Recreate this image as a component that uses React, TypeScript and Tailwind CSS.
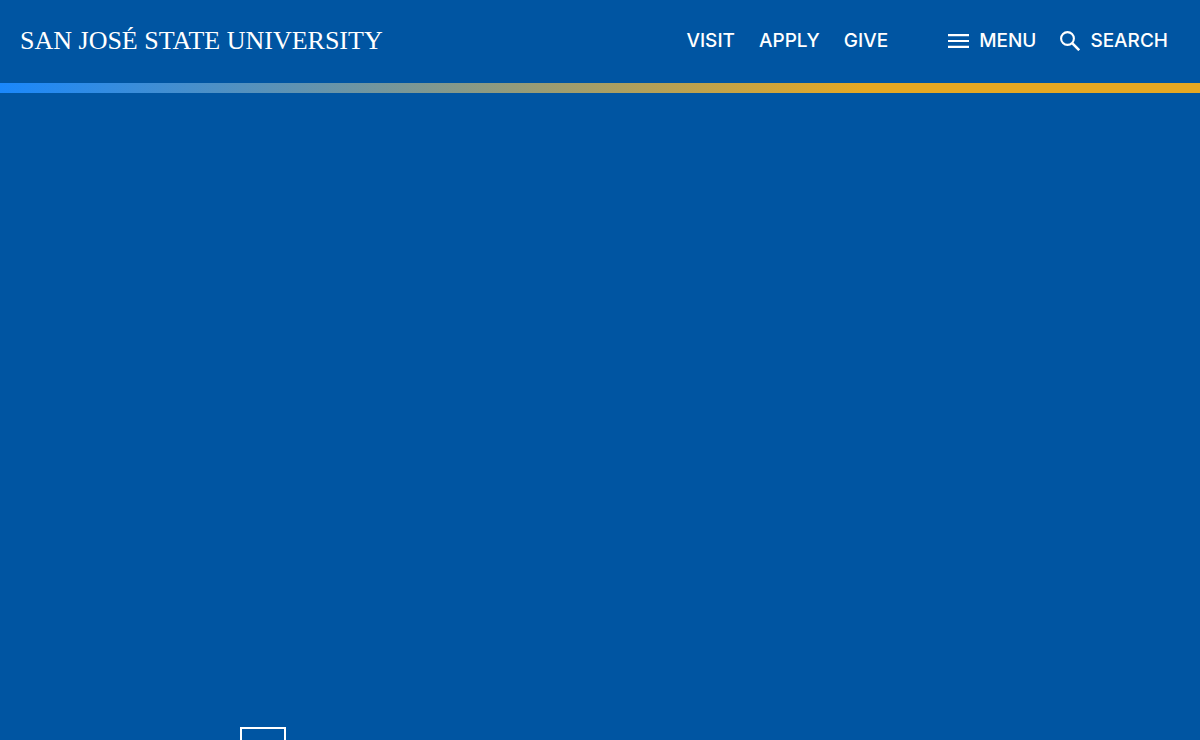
const links = [
  { label: "VISIT", href: "/visit" },
  { label: "APPLY", href: "/apply" },
  { label: "GIVE", href: "/give" },
];

function MenuIcon() {
  return (
    <svg width="21" height="14" viewBox="0 0 21 14" fill="currentColor" aria-hidden="true">
      <path d="M0 0h21v2.2H0zM0 5.9h21v2.2H0zM0 11.8h21V14H0z" />
    </svg>
  );
}

function SearchIcon() {
  return (
    <svg width="20" height="20" viewBox="0 0 20 20" fill="none" stroke="currentColor" strokeWidth="2.1" aria-hidden="true">
      <circle cx="7.5" cy="7.5" r="6.4" />
      <path d="M12.2 12.2l7 7" strokeWidth="2.6" />
    </svg>
  );
}

function Header() {
  return (
    <header>
      <div className="flex h-[83px] items-center justify-between pb-0.5 pl-5 pr-8">
        <a href="/" className="font-['Liberation_Serif',serif] text-[26px] leading-8 whitespace-nowrap">
          SAN JOSÉ STATE UNIVERSITY
        </a>
        <div className="flex items-center gap-[60px] font-['Inter',sans-serif] text-[19px] font-medium leading-6">
          <nav className="flex gap-6">
            {links.map((link) => (
              <a key={link.label} href={link.href}>
                {link.label}
              </a>
            ))}
          </nav>
          <div className="flex gap-6">
            <button type="button" className="flex items-center gap-2.5">
              <MenuIcon />
              MENU
            </button>
            <button type="button" className="flex items-center gap-2.5">
              <SearchIcon />
              SEARCH
            </button>
          </div>
        </div>
      </div>
      <div className="h-2.5 bg-linear-to-r/srgb from-[#1a88fc] to-[#e5a823] to-72%" />
    </header>
  );
}

export default function App() {
  return (
    <div className="flex h-screen flex-col overflow-hidden bg-[#0055a2] text-white">
      <Header />
      {/* Hero area, its outlined box starts at the fold */}
      <main className="flex flex-1 items-end px-[20%]">
        <div className="-mb-[33px] size-[46px] border-2 border-white" />
      </main>
    </div>
  );
}
